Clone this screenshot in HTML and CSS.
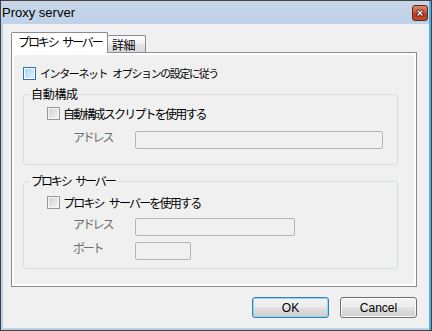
FILE: index.html
```html
<!DOCTYPE html>
<html lang="ja">
<head>
    <meta charset="UTF-8">
    <title>Proxy server</title>
    <link rel="stylesheet" href="styles.css">
</head>
<body>
    <div class="window">
        <div class="titlebar">
            <span class="title">Proxy server</span>
            <svg class="close" width="16" height="16" viewBox="0 0 16 16">
                <defs>
                    <linearGradient id="closeFill" x1="0" y1="0" x2="0" y2="1">
                        <stop offset="0" stop-color="#dc8a75"/>
                        <stop offset="0.45" stop-color="#cc5a3e"/>
                        <stop offset="0.55" stop-color="#b8371a"/>
                        <stop offset="1" stop-color="#c44c2e"/>
                    </linearGradient>
                </defs>
                <rect x="0.5" y="0.5" width="15" height="15" rx="2.5" fill="url(#closeFill)" stroke="#5a2a22"/>
                <path d="M6 6 L10 10 M10 6 L6 10" stroke="#4a1c14" stroke-width="2.8" stroke-linecap="square"/>
                <path d="M6 6 L10 10 M10 6 L6 10" stroke="#ffffff" stroke-width="1.3" stroke-linecap="square"/>
            </svg>
        </div>

        <div class="client">
            <div class="tabs">
                <div class="tab active">プロキシ サーバー</div>
                <div class="tab">詳細</div>
            </div>

            <div class="panel">
                <div class="check inet">
                    <span class="box on"></span>
                    <span>インターネット オプションの設定に従う</span>
                </div>

                <fieldset class="group">
                    <legend class="kanji">自動構成</legend>
                    <div class="check">
                        <span class="box"></span>
                        <span>自動構成スクリプトを使用する</span>
                    </div>
                    <div class="field first">
                        <label>アドレス</label>
                        <input type="text" class="input wide" disabled>
                    </div>
                </fieldset>

                <fieldset class="group proxy">
                    <legend>プロキシ サーバー</legend>
                    <div class="check">
                        <span class="box"></span>
                        <span>プロキシ サーバーを使用する</span>
                    </div>
                    <div class="field">
                        <label>アドレス</label>
                        <input type="text" class="input medium" disabled>
                    </div>
                    <div class="field">
                        <label>ポート</label>
                        <input type="text" class="input short" disabled>
                    </div>
                </fieldset>
            </div>

            <div class="buttons">
                <button class="btn default">OK</button>
                <button class="btn">Cancel</button>
            </div>
        </div>
    </div>
</body>
</html>
```

FILE: styles.css
```css
body {
    margin: 0;
    font-family: "Noto Sans CJK JP", sans-serif;
    font-size: 12px;
    letter-spacing: -1.8px;
    word-spacing: 4px;
    color: #000;
}
.window {
    width: 432px;
    height: 331px;
    box-sizing: border-box;
    border: 1px solid #434343;
    background: linear-gradient(90deg, #b9d1ea calc(100% - 2px), #4cb2e6 calc(100% - 2px));
}
.titlebar {
    height: 23px;
    margin-right: 2px;
    display: flex;
    justify-content: space-between;
    align-items: flex-start;
    background: linear-gradient(#c8d6e6, #bed2e9);
}
.title {
    font-family: "Liberation Sans", sans-serif;
    font-size: 13px;
    letter-spacing: 0;
    word-spacing: 0;
    line-height: 23px;
    padding-left: 1px;
}
.close {
    display: block;
    flex: none;
    margin: 4px 1px 0 0;
}
.client {
    height: 304px;
    margin: 0 2px;
    box-sizing: border-box;
    padding: 8px 12px 0 8px;
    background: #f0f0f0;
}
.tabs {
    display: flex;
    align-items: flex-end;
    height: 20px;
}
.tab {
    box-sizing: border-box;
    border: 1px solid #898c95;
    border-bottom: none;
    border-radius: 2px 2px 0 0;
    white-space: nowrap;
}
.tab.active {
    width: 97px;
    height: 21px;
    margin-bottom: -1px;
    padding-left: 6px;
    line-height: 18px;
    letter-spacing: -2.1px;
    background: #fff;
    position: relative;
    z-index: 1;
}
.tab:not(.active) {
    width: 38px;
    height: 17px;
    padding-left: 4px;
    line-height: 17px;
    letter-spacing: -0.5px;
    border-left: none;
    background: linear-gradient(#fdfdfd, #f1f1f1 50%, #e6e6e6 51%, #d9d9d9);
}
.panel {
    width: 406px;
    height: 235px;
    box-sizing: border-box;
    border: 1px solid #898c95;
    box-shadow: inset 0 0 0 2px #fff;
    padding: 14px 18px 0 11px;
}
.check {
    display: flex;
    align-items: center;
    gap: 3px;
    height: 13px;
    line-height: 13px;
    white-space: nowrap;
}
.check.inet {
    gap: 4px;
    font-size: 11px;
    letter-spacing: -1.4px;
}
.box {
    width: 13px;
    height: 13px;
    box-sizing: border-box;
    flex: none;
    border: 1px solid #979797;
    background: linear-gradient(135deg, #cfcfcf, #f6f6f6);
    box-shadow: inset 0 0 0 1px #f7f7f7;
}
.box.on {
    border-color: #2f72ad;
    background: linear-gradient(135deg, #a6d4f3, #def0fb);
    box-shadow: inset 0 0 0 1px #fff;
}
.group {
    margin: 7px 0 0;
    padding: 6px 0 15px 6px;
    border: 1px solid #d5dfe5;
    border-radius: 3px;
}
.group legend {
    padding: 0 1px;
    line-height: 14px;
    letter-spacing: -2.1px;
    white-space: nowrap;
}
.group legend.kanji {
    letter-spacing: -0.3px;
}
.group .check {
    margin-left: 17px;
}
.group.proxy {
    margin-top: 9px;
    padding-top: 8px;
    padding-bottom: 8px;
}
.field {
    display: flex;
    align-items: flex-start;
    padding-left: 43px;
    margin-top: 6px;
}
.proxy .check + .field {
    margin-top: 9px;
}
.field.first {
    margin-top: 11px;
}
.field label {
    width: 62px;
    line-height: 12px;
    letter-spacing: -2.2px;
    color: #6d6d6d;
    white-space: nowrap;
}
.input {
    height: 18px;
    box-sizing: border-box;
    margin: 0;
    border: 1px solid #b5b5b5;
    border-radius: 2px;
    background: #f0f0f0;
}
.input.wide { width: 248px; }
.input.medium { width: 160px; }
.input.short { width: 56px; }
.buttons {
    display: flex;
    justify-content: flex-end;
    gap: 11px;
    margin-top: 10px;
}
.btn {
    width: 77px;
    height: 21px;
    padding: 0;
    border: 1px solid #707070;
    border-radius: 3px;
    background: linear-gradient(#f3f3f3, #ececec 48%, #dedede 52%, #d0d0d0);
    box-shadow: inset 0 0 0 1px #fbfbfb;
    font-family: "Liberation Sans", sans-serif;
    font-size: 12px;
    letter-spacing: 0;
    word-spacing: 0;
    color: #000;
}
.btn.default {
    border-color: #3c7fb1;
    box-shadow: inset 0 0 0 1px #8fd6f6;
}
```
